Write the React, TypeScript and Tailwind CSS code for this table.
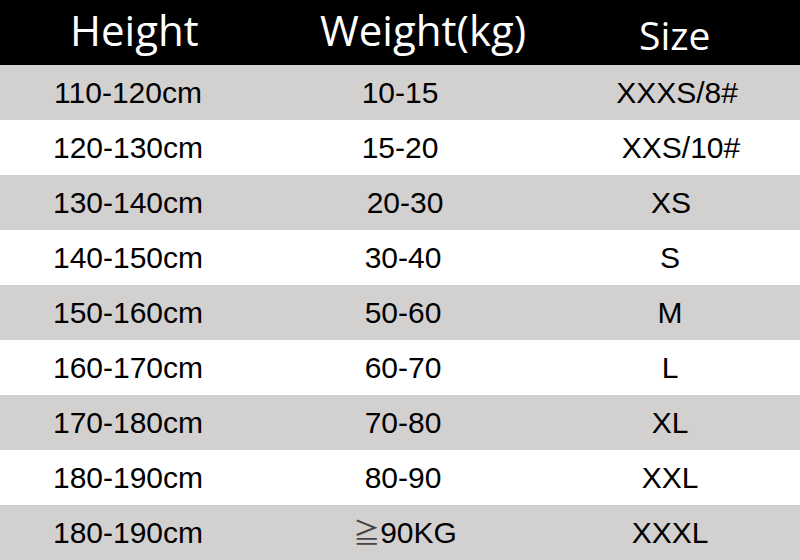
import React from "react";

const rows: { h: string; w: string; s: string; gray: boolean; wo: string; so: string }[] = [
  { h: "110-120cm", w: "10-15", s: "XXXS/8#", gray: true, wo: "pr-[4px]", so: "pl-[14px]" },
  { h: "120-130cm", w: "15-20", s: "XXS/10#", gray: false, wo: "pr-[4px]", so: "pl-[22px]" },
  { h: "130-140cm", w: "20-30", s: "XS", gray: true, wo: "pl-[6px]", so: "pl-[2px]" },
  { h: "140-150cm", w: "30-40", s: "S", gray: false, wo: "pl-[2px]", so: "" },
  { h: "150-160cm", w: "50-60", s: "M", gray: true, wo: "pl-[2px]", so: "" },
  { h: "160-170cm", w: "60-70", s: "L", gray: false, wo: "pl-[2px]", so: "" },
  { h: "170-180cm", w: "70-80", s: "XL", gray: true, wo: "pl-[2px]", so: "" },
  { h: "180-190cm", w: "80-90", s: "XXL", gray: false, wo: "pl-[2px]", so: "" },
  { h: "180-190cm", w: "≧90KG", s: "XXXL", gray: true, wo: "pl-[6px]", so: "" },
];

export default function App() {
  return (
    <div className="w-[800px] h-[560px] bg-white overflow-hidden flex flex-col">
      <div className="h-[65px] bg-black text-white grid grid-cols-[256px_292px_252px] font-['Open_Sans',sans-serif]">
        <div className="pl-[70px] pt-[9px] text-[42px] leading-none">Height</div>
        <div className="pl-[64px] pt-[9px] text-[42px] leading-none">Weight(kg)</div>
        <div className="pl-[91px] pt-[15px] text-[39px] leading-none">Size</div>
      </div>
      {rows.map((r, i) => (
        <div
          key={i}
          className={`h-[55px] grid grid-cols-[256px_292px_244px_8px] items-center text-[30px] leading-none text-black font-['Liberation_Sans','Noto_Sans_CJK_SC',sans-serif] ${
            r.gray ? "bg-[#d3d0d0]" : "bg-white"
          }`}
        >
          <div className="text-center">{r.h}</div>
          <div className={`text-center ${r.wo}`}>
            {r.w.startsWith("≧") ? (
              <span>
                <span className="font-['Noto_Sans_CJK_SC',sans-serif] text-[27px] text-[#444]">≧</span>
                <span>90KG</span>
              </span>
            ) : (
              r.w
            )}
          </div>
          <div className={`text-center ${r.so}`}>{r.s}</div>
          <div />
        </div>
      ))}
    </div>
  );
}
